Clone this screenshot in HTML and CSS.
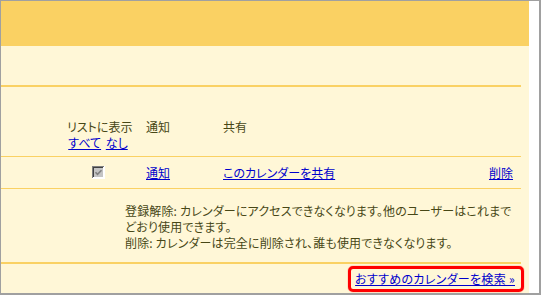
FILE: index.html
```html
<!DOCTYPE html>
<html lang="ja">
<head>
    <meta charset="UTF-8">
    <title>カレンダー設定</title>
    <link rel="stylesheet" href="styles.css">
</head>
<body>
    <div class="frame">
        <div class="panel">
            <div class="banner"></div>
            <div class="cal-list">
                <div class="row head">
                    <div class="c-show">リストに表示<br><a href="#">すべて</a> <a href="#">なし</a></div>
                    <div class="c-notify">通知</div>
                    <div class="c-share">共有</div>
                    <div class="c-del"></div>
                </div>
                <div class="row">
                    <div class="c-show">
                        <span class="check">
                            <svg width="13" height="13" viewBox="0 0 13 13">
                                <rect x="0" y="0" width="13" height="13" fill="#ffffff"/>
                                <path d="M0 0H12V1H1V12H0Z" fill="#808080"/>
                                <path d="M1 1H11V2H2V11H1Z" fill="#404040"/>
                                <rect x="2" y="2" width="9" height="9" fill="#c4c4c4"/>
                                <path d="M3.5 6.2L5.5 8.3L9.5 4.2" fill="none" stroke="#808080" stroke-width="1.6"/>
                            </svg>
                        </span>
                    </div>
                    <div class="c-notify"><a href="#">通知</a></div>
                    <div class="c-share"><a href="#">このカレンダーを共有</a></div>
                    <div class="c-del"><a href="#">削除</a></div>
                </div>
                <div class="note">
                    登録解除: カレンダーにアクセスできなくなります。他のユーザーはこれまで<br>どおり使用できます。<br>
                    削除: カレンダーは完全に削除され、誰も使用できなくなります。
                </div>
            </div>
            <div class="footer">
                <a href="#" class="find">おすすめのカレンダーを検索 »</a>
            </div>
        </div>
    </div>
</body>
</html>
```

FILE: styles.css
```css
body {
    margin: 0;
    background: #fff;
    font-family: 'Noto Sans CJK JP', 'DejaVu Sans', sans-serif;
    font-size: 12px;
    line-height: 16px;
    color: #474716;
    font-feature-settings: "palt";
}
a {
    color: #0000cc;
}
.frame {
    display: flex;
    width: 538px;
    height: 292px;
    border-style: solid;
    border-color: #a0a0a0;
    border-width: 1px 2px 2px 1px;
    background: #fff;
}
.panel {
    width: 528px;
    background: #fff7d7;
    display: flex;
    flex-direction: column;
}
.banner {
    height: 45px;
    background: #fad163;
}
.cal-list {
    width: 520px;
    margin-top: 39px;
    border-top: 2px solid #fad163;
    border-bottom: 2px solid #fad163;
}
.row {
    display: grid;
    grid-template-columns: 62px 60px 1fr auto;
    column-gap: 17px;
    padding: 8px 8px 7px 66px;
    border-bottom: 1px solid #fad163;
}
.row.head {
    padding-top: 32px;
    padding-bottom: 5px;
}
.c-show {
    text-align: center;
    white-space: nowrap;
}
.c-show a + a {
    margin-left: 2px;
}
.check {
    display: inline-block;
    width: 13px;
    height: 13px;
    margin-top: 1px;
    vertical-align: top;
}
.check svg {
    display: block;
}
.c-del {
    text-align: right;
}
.note {
    padding: 14px 0 11px 124px;
    white-space: nowrap;
    letter-spacing: 0.15px;
}
.footer {
    display: flex;
    justify-content: flex-end;
    padding: 2px 5px 0 0;
}
.find {
    display: block;
    padding: 2px 6px 2px 4px;
    border: 3px solid #ff0000;
    border-radius: 5px;
    box-shadow: 0 0 1px #ff0000;
    letter-spacing: 0.3px;
}
```
